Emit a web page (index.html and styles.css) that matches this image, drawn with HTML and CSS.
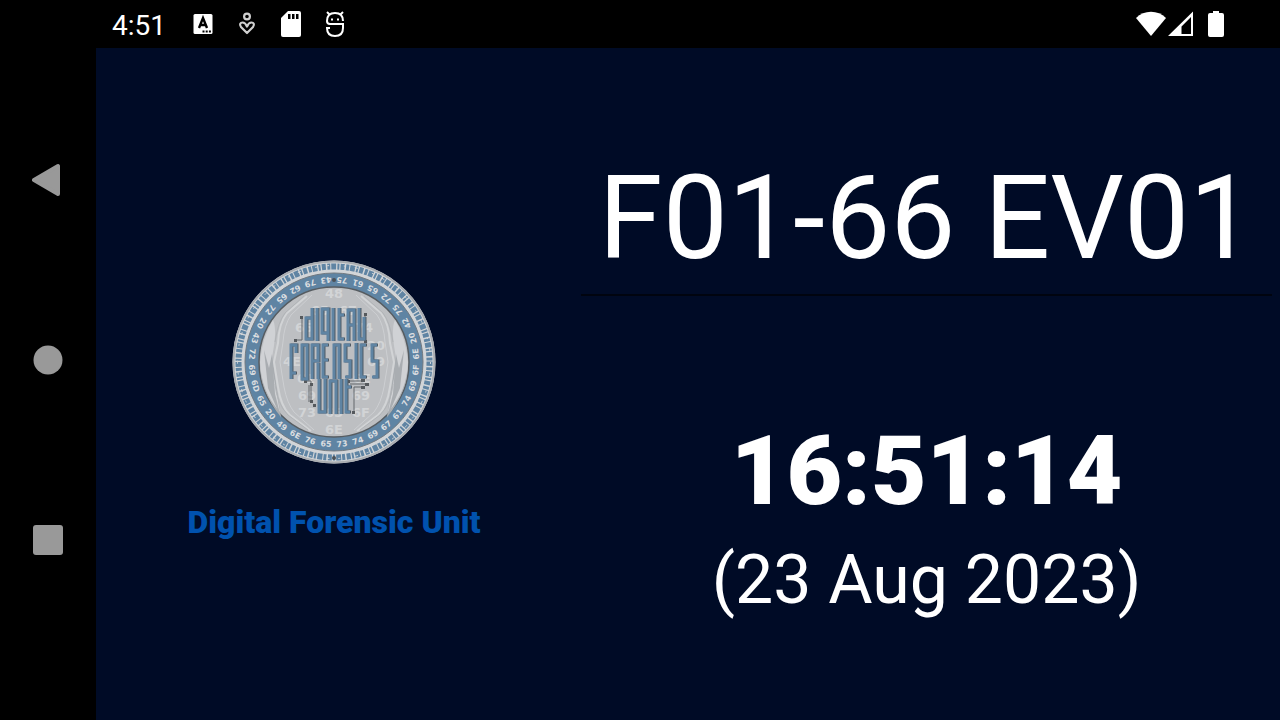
FILE: index.html
```html
<!DOCTYPE html>
<html lang="en">
<head>
<meta charset="utf-8">
<meta name="viewport" content="width=device-width, initial-scale=1">
<title>Digital Forensic Unit</title>
<link rel="stylesheet" href="styles.css">
</head>
<body>
<div class="device">
  <header class="status">
    <div class="status-group">
      <span class="status-time">4:51</span>
      <svg class="status-icon" viewBox="0 0 32 32" aria-hidden="true"><path fill="#fff" d="M8 6h16a1.500 1.500 0 0 1 1.500 1.500v17a1.500 1.500 0 0 1-1.500 1.500H8a1.500 1.500 0 0 1-1.500-1.500v-17A1.500 1.500 0 0 1 8 6z"/><path fill="none" stroke="#000" stroke-width="2.400" d="M12 20l4-10 4 10M13.500 17h5"/><path d="M15.500 22.500h2v2h-2zM18.700 22.500h2v2h-2zM21.900 22.500h2v2h-2z"/></svg>
      <svg class="status-icon" viewBox="0 0 32 32" fill="none" stroke="#d0d0d0" stroke-width="2.200" stroke-linejoin="round" aria-hidden="true"><circle cx="16" cy="8.500" r="2.900"/><path d="M16 25l-6-6c-2-3-.5-4.500 1.500-4.500S15 16 16 18.500c1-2.500 2.500-4 4.500-4S24 16 22 19z"/></svg>
      <svg class="status-icon" viewBox="0 0 32 32" aria-hidden="true"><path fill="#fff" d="M13 3h11a2 2 0 0 1 2 2v22a2 2 0 0 1-2 2H8a2 2 0 0 1-2-2V10z"/><path d="M13 6h2.500v5H13zM17 6h2.500v5H17zM21 6h2.500v5H21z"/></svg>
      <svg class="status-icon" viewBox="0 0 32 32" fill="none" stroke="#fff" stroke-width="2" aria-hidden="true"><path d="M8 4l3 3M24 4l-3 3M24 13c0-5-3-8-8-8s-8 3-8 8c0 2 1 3 3 3h13v4c0 5-3 8-8 8s-8-3-8-8h3"/><path stroke="none" fill="#fff" d="M12 10.500h2v2h-2zM18 10.500h2v2h-2z"/></svg>
    </div>
    <div class="status-group status-right">
      <svg class="signal" viewBox="0 0 32 32" aria-hidden="true"><path fill="#fff" d="M1 10C9 1.500 23 1.500 31 10L16 28z"/></svg>
      <svg class="signal" viewBox="0 0 32 32" aria-hidden="true"><path fill="#fff" fill-rule="evenodd" d="M26 3.500V28H1zM24 9l-9.500 9.500V26H24z"/></svg>
      <svg class="battery" viewBox="0 0 16 28" aria-hidden="true"><path fill="#fff" d="M5 1h6v2h3q2 0 2 2v20q0 2-2 2H2q-2 0-2-2V5q0-2 2-2h3z"/></svg>
    </div>
  </header>
  <nav class="navbar" aria-label="System">
    <button class="nav-button" aria-label="Back"><svg viewBox="0 0 32 36"><path fill="#999" stroke="#999" stroke-width="4" stroke-linejoin="round" d="M2 18L26 4v28z"/></svg></button>
    <button class="nav-button" aria-label="Home"><svg viewBox="0 0 32 36"><circle cx="16" cy="18" r="14.500" fill="#999"/></svg></button>
    <button class="nav-button" aria-label="Overview"><svg viewBox="0 0 32 36"><rect x="1" y="3" width="30" height="30" rx="3" fill="#999"/></svg></button>
  </nav>
  <main class="board">
    <section class="brand">
      <svg class="seal" viewBox="-102 -102 204 204" role="img" aria-label="Digital Forensics Unit seal">
        <circle r="101.500" fill="#d2d5d8"/>
        <circle r="100.500" fill="none" stroke="#a9adb1" stroke-width="2"/>
        <circle r="95.500" fill="none" stroke="#5f84a3" stroke-width="6" stroke-dasharray="4 1.500 3 1 5 1.300 2 1.200"/>
        <circle r="96.500" fill="none" stroke="#d2d5d8" stroke-width="1" stroke-dasharray="2 9 3 15"/>
        <circle r="82" fill="none" stroke="#5f84a3" stroke-width="14"/>
        <circle r="89" fill="none" stroke="#717980"/>
        <circle r="75" fill="#bdbfc2" stroke="#565c61" stroke-width="1.500"/>
        <g id="folds">
          <path fill="#a9adb1" d="M-72-12q-4 22 2 38 7 18 17 29l-8-54-4-22z"/>
          <path fill="#d0d2d5" d="M-74 0q2-24 13-42 5 10-2 42l9 50q-19-20-20-50z"/>
          <path fill="#a9adb1" d="M-70-12l5 18 3-14 3 40 6 24-13-30z"/>
          <path fill="none" stroke="#d2d4d6" stroke-width="2" d="M-27-66l-20 17q-8 10-9 30L-60 0l4 25q3 20 12 28l21 16"/>
          <path fill="none" stroke="#cdcfd2" d="M-22-67l-21 20q-7 10-8 27L-54 0l4 25q3 16 10 25l20 18"/>
          <path fill="none" stroke="#b1b4b7" d="M-30-66l-19 17q-7 9-10 29M-59 22q2 20 13 31l20 15"/>
        </g>
        <use href="#folds" transform="scale(-1 1)"/>
        <g class="seal-hex">
          <text x="0" y="-64">48</text>
          <text x="-14" y="-47">65</text><text x="14" y="-47">67</text>
          <text x="-30" y="-30">65</text><text x="30" y="-30">74</text>
          <text x="-42" y="4">4E</text><text x="42" y="-12">20</text><text x="42" y="4">69</text>
          <text x="-28" y="21">61</text><text x="28" y="21">6E</text>
          <text x="-27" y="38">69</text><text x="27" y="38">69</text>
          <text x="-27" y="55">73</text><text x="0" y="55">65</text><text x="27" y="55">6F</text>
          <text x="0" y="72">6E</text>
        </g>
        <g id="ring" class="seal-ring"></g>
        <circle cy="-82" r="2" fill="#4b5258"/><circle cy="96" r="2" fill="#4b5258"/>
        <path fill="none" stroke="#62666a" d="M-32-45v23h-7M31-47v26M-29 19h6v22M-25 23v17M14 19h15M16 22h18M29 25H20v25"/>
        <path fill="#55595d" d="M-34-46h3v3h-3zM-40-23h3v3h-3zM30-49h3v3h-3zM30-22h3v3h-3zM-30 18h3v3h-3zM-24 21h3v3h-3zM-24 38h3v3h-3zM-21 42h3v3h-3zM27 17h4v3h-4zM31 21h4v3h-4zM27 24h4v3h-4zM18 49h3v3h-3zM13 18h3v3h-3z"/>
        <g id="traces" fill="none">
          <path d="M-22-54v31h-6v-21h6M-17-54v33M-6-21v-32h-6v24h6M-1-54v33M5-54v31h5M5-47h5M14-21v-31h6v31M14-37h6M25-54v31h5v-22"/>
          <path d="M-43 17v-34h5v8M-43 11h5M-32 17v-34h5v34zM-22 17v-34h6v16h-6M-16 1v16M-6-17h-5v32h5M-11-2h5M0 17v-34h5v34M16-17h-5v16h5v16h-5M22-19v36M32-17h-5v32h5M43-17h-5v16h5v16h-5"/>
          <path d="M-15 17v33h6v-33M-4 52v-33h6v33M7 17v35M12 17v33h4M12 25h5"/>
        </g>
      </svg>
      <h1 class="brand-name">Digital Forensic Unit</h1>
    </section>
    <section class="record">
      <input class="exhibit" type="text" value="F01-66 EV01" aria-label="Exhibit reference" size="8">
      <time class="clock">16:51:14</time>
      <time class="date">(23 Aug 2023)</time>
    </section>
  </main>
</div>
<script src="seal.js"></script>
</body>
</html>
```
FILE: styles.css
```css
* { box-sizing: border-box; }
body { margin: 0; background: #000; color: #fff; font-family: Roboto, sans-serif; }
.device { display: grid; grid-template: 48px 1fr / 96px 1fr; min-height: 100vh; }
.status { grid-column: 1 / -1; grid-row: 1; display: flex; justify-content: space-between; align-items: center; padding: 0 56px 0 112px; }
.status-group { display: flex; align-items: center; gap: 12px; }
.status-time { font-size: 28px; line-height: 48px; margin-right: 9px; padding-top: 3px; }
.status-icon { width: 32px; height: 32px; }
.status-right { gap: 0; }
.signal { width: 32px; height: 32px; }
.battery { width: 16px; height: 28px; margin-left: 9px; }
.navbar { grid-row: 1 / -1; grid-column: 1; display: flex; flex-direction: column; justify-content: center; gap: 84px; }
.nav-button { display: grid; place-items: center; width: 96px; height: 96px; padding: 0; border: 0; background: none; }
.nav-button svg { width: 32px; height: 36px; }
.board { display: grid; grid-template-columns: 27fr 40fr; background: #000b26; }
.brand { display: flex; flex-direction: column; align-items: center; justify-content: center; gap: 39px; padding: 33px 1px 0 0; }
.seal { width: 204px; height: 204px; }
.brand-name { margin: 0; color: #0052ae; font-size: 32px; line-height: 38px; font-weight: 900; }
.record { display: flex; flex-direction: column; align-items: center; min-width: 0; padding: 92px 8px 0; }
.exhibit { width: 100%; height: 156px; padding: 1px 0 0; border: 0; border-bottom: 2px solid #00040f; border-radius: 0; outline: 0; background: none; color: #fff; font: 400 116px/136px Roboto, sans-serif; text-align: center; }
.clock { margin-top: 119px; font-size: 96px; line-height: 112px; font-weight: 900; }
.date { font-size: 68px; line-height: 106px; }
.seal-hex { fill: #d2d4d6; font: 700 13px "DejaVu Sans", sans-serif; text-anchor: middle; }
.seal-ring { fill: #dadde0; font: 700 8px "DejaVu Sans", sans-serif; text-anchor: middle; }
#traces { stroke: #5f84a3; stroke-width: 3; filter: drop-shadow(1px 0 0 #4f5a63); }
```
FILE: seal.js
```js
// Hex pairs run anticlockwise round the blue ring, starting at the top.
const pairs = "43 79 62 65 72 20 43 72 69 6D 65 20 49 6E 76 65 73 74 69 67 61 74 69 6F 6E 20 42 75 72 65 61 75".split(" ");
const ring = document.getElementById("ring");
pairs.forEach((pair, i) => {
  const label = document.createElementNS("http://www.w3.org/2000/svg", "text");
  label.textContent = pair;
  label.setAttribute("y", 85);
  label.setAttribute("transform", `rotate(${180 - (i + 0.5) * 360 / pairs.length})`);
  ring.append(label);
});
```
